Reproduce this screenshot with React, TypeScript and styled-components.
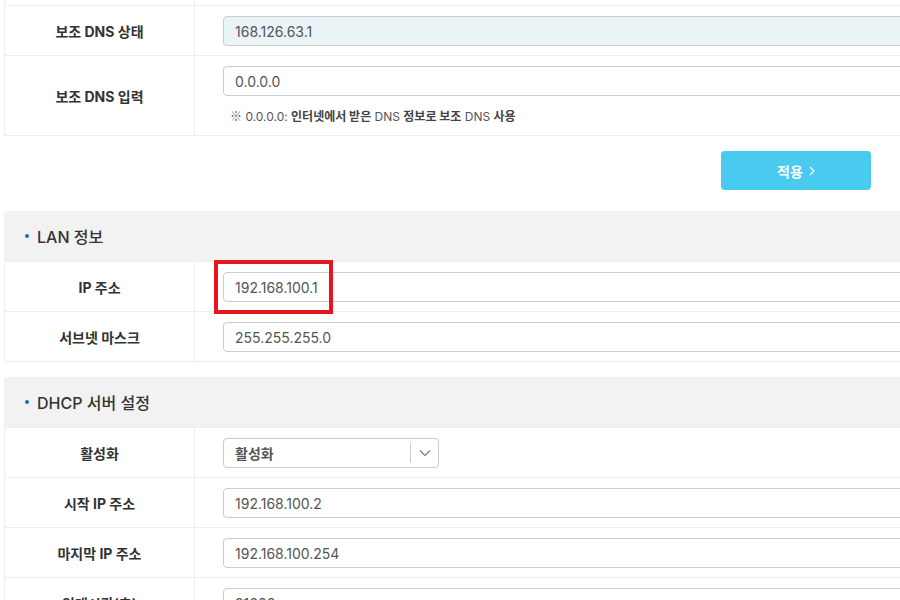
import styled, { createGlobalStyle } from 'styled-components';

const GlobalStyle = createGlobalStyle`
  html, body {
    margin: 0;
    padding: 0;
    background: #fff;
    overflow: hidden;
  }
  body {
    font-family: Inter, "Noto Sans CJK KR", sans-serif;
    color: #333;
  }
`;

const Page = styled.div`
  width: 1200px;
  padding-left: 4px;
  margin-top: -45px;
`;

const Table = styled.div`
  border-left: 1px solid #eee;
  border-bottom: 1px solid #eee;
`;

const Row = styled.div<{ tall?: boolean }>`
  display: grid;
  grid-template-columns: 190px 1fr;
  min-height: ${(p) => (p.tall ? 79 : 49)}px;
  border-top: 1px solid #eee;
`;

const Label = styled.div`
  display: flex;
  align-items: center;
  justify-content: center;
  border-right: 1px solid #eee;
  font-size: 14px;
  font-weight: 700;
  color: #333;
`;

const Value = styled.div`
  padding: 10px 0 0 28px;
  position: relative;
`;

const Input = styled.div<{ readOnly?: boolean }>`
  box-sizing: border-box;
  width: 900px;
  height: 30px;
  border: 1px solid #ccc;
  border-radius: 4px;
  background: ${(p) => (p.readOnly ? '#eaf3f6' : '#fff')};
  padding-left: 11px;
  display: flex;
  align-items: center;
  font-size: 14px;
  color: #555;
`;

const Note = styled.div`
  margin-top: 11px;
  padding-left: 7px;
  font-size: 12px;
  color: #555;

  b {
    font-weight: 700;
    color: #444;
  }
`;

const Mark = styled.span`
  font-family: "Noto Sans CJK KR", sans-serif;
  font-size: 12px;
  color: #666;
`;

const Highlight = styled.div`
  position: absolute;
  left: 19px;
  top: -2px;
  width: 119px;
  height: 54px;
  box-sizing: border-box;
  border: 4px solid #e5161e;
  pointer-events: none;
`;

const ButtonRow = styled.div`
  width: 867px;
  display: flex;
  justify-content: flex-end;
  padding: 15px 0 21px;
`;

const ApplyButton = styled.button`
  width: 150px;
  height: 39px;
  border: none;
  border-radius: 4px;
  background: #48cbef;
  color: #fff;
  font-family: inherit;
  font-size: 14px;
  font-weight: 700;
  display: flex;
  align-items: center;
  justify-content: center;
  gap: 6px;
`;

const SectionHeader = styled.div`
  height: 50px;
  background: #f2f2f2;
  border-top-left-radius: 4px;
  display: flex;
  align-items: center;
  padding-left: 21px;
  gap: 8px;
  font-size: 16px;
  font-weight: 500;
  color: #333;
`;

const Bullet = styled.span`
  width: 4px;
  height: 4px;
  border-radius: 50%;
  background: #1a6dc2;
`;

const Section = styled.div`
  margin-bottom: 15px;
`;

const Select = styled.div`
  box-sizing: border-box;
  width: 216px;
  height: 30px;
  border: 1px solid #ccc;
  border-radius: 4px;
  display: flex;
  align-items: center;
  font-size: 14px;
  font-weight: 700;
  color: #555;
`;

const SelectText = styled.span`
  flex: 1;
  padding-left: 11px;
`;

const SelectArrow = styled.span`
  width: 27px;
  height: 20px;
  border-left: 1px solid #ccc;
  display: flex;
  align-items: center;
  justify-content: center;
`;

const Chevron = ({ dir }: { dir: 'down' | 'right' }) =>
  dir === 'down' ? (
    <svg width="12" height="8" viewBox="0 0 12 8">
      <path d="M1 1.5 L6 6.5 L11 1.5" fill="none" stroke="#777" strokeWidth="1.1" />
    </svg>
  ) : (
    <svg width="6" height="10" viewBox="0 0 6 10">
      <path d="M1 1 L5 5 L1 9" fill="none" stroke="#fff" strokeWidth="1.2" />
    </svg>
  );

const TextRow = ({ label, value, readOnly }: { label: string; value: string; readOnly?: boolean }) => (
  <Row>
    <Label>{label}</Label>
    <Value>
      <Input readOnly={readOnly}>{value}</Input>
    </Value>
  </Row>
);

export default function App() {
  return (
    <>
      <GlobalStyle />
      <Page>
        <Table>
          {/* row scrolled above the top of the view */}
          <Row>
            <Label />
            <Value />
          </Row>
          <TextRow label="보조 DNS 상태" value="168.126.63.1" readOnly />
          <Row tall>
            <Label>보조 DNS 입력</Label>
            <Value>
              <Input>0.0.0.0</Input>
              <Note>
                <Mark>※</Mark> 0.0.0.0: <b>인터넷에서 받은</b> DNS <b>정보로 보조</b> DNS <b>사용</b>
              </Note>
            </Value>
          </Row>
        </Table>

        <ButtonRow>
          <ApplyButton>
            적용 <Chevron dir="right" />
          </ApplyButton>
        </ButtonRow>

        <Section>
          <SectionHeader>
            <Bullet />
            LAN 정보
          </SectionHeader>
          <Table>
            <Row>
              <Label>IP 주소</Label>
              <Value>
                <Input>192.168.100.1</Input>
                <Highlight />
              </Value>
            </Row>
            <TextRow label="서브넷 마스크" value="255.255.255.0" />
          </Table>
        </Section>

        <Section>
          <SectionHeader>
            <Bullet />
            DHCP 서버 설정
          </SectionHeader>
          <Table>
            <Row>
              <Label>활성화</Label>
              <Value>
                <Select>
                  <SelectText>활성화</SelectText>
                  <SelectArrow>
                    <Chevron dir="down" />
                  </SelectArrow>
                </Select>
              </Value>
            </Row>
            <TextRow label="시작 IP 주소" value="192.168.100.2" />
            <TextRow label="마지막 IP 주소" value="192.168.100.254" />
            <TextRow label="임대시간(초)" value="21600" />
          </Table>
        </Section>
      </Page>
    </>
  );
}
